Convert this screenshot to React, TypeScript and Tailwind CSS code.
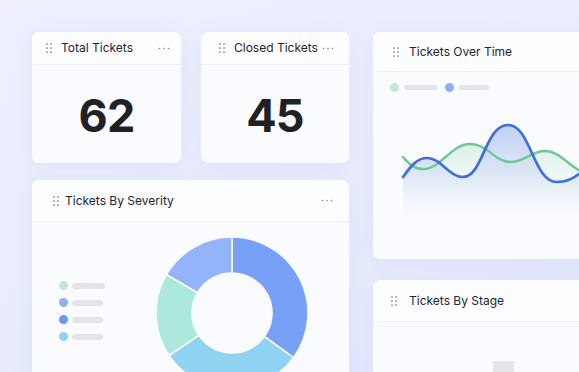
import type { ReactNode } from "react";

function DragHandle() {
  return (
    <svg width="6" height="10" viewBox="0 0 6 10" className="shrink-0">
      {[1, 5, 9].map((cy) =>
        [1, 5].map((cx) => (
          <circle key={`${cx}-${cy}`} cx={cx} cy={cy} r="0.85" fill="#6b7280" />
        )),
      )}
    </svg>
  );
}

function MoreDots() {
  return (
    <svg width="12" height="3" viewBox="0 0 12 3" className="shrink-0">
      {[1.5, 6, 10.5].map((cx) => (
        <circle key={cx} cx={cx} cy="1.5" r="0.75" fill="#7b8190" />
      ))}
    </svg>
  );
}

type CardProps = {
  title: string;
  className: string;
  headerClass: string;
  gap?: string;
  more?: boolean;
  children?: ReactNode;
};

function Card({ title, className, headerClass, gap = "ml-[9px]", more, children }: CardProps) {
  return (
    <section
      className={`flex flex-col overflow-hidden rounded-[7px] bg-[#fafbfe] shadow-[0_4px_22px_rgba(110,120,230,0.09)] ${className}`}
    >
      <header
        className={`flex shrink-0 items-center border-b border-[#eff0f6] bg-[#fdfdff] ${headerClass}`}
      >
        <DragHandle />
        <h2
          className={`${gap} flex-1 whitespace-nowrap text-[12px] font-normal text-[#23252c]`}
        >
          {title}
        </h2>
        {more ? <MoreDots /> : null}
      </header>
      {children}
    </section>
  );
}

type StatCardProps = { title: string; value: string; className: string; headerClass: string };

function StatCard({ title, value, className, headerClass }: StatCardProps) {
  return (
    <Card title={title} className={`h-[131px] ${className}`} headerClass={`h-[33px] ${headerClass}`} more>
      <div className="flex flex-1 items-center justify-center pt-[3px]">
        <span className="text-[45px] font-bold leading-none tracking-[-0.02em] text-[#1f2127]">
          {value}
        </span>
      </div>
    </Card>
  );
}

const blueLine =
  "M30 105 C38 94 44 86 54 86 C68 86 76 105 90 105 C110 105 112 53 135 53 C158 53 160 110 184 110 C198 110 204 103 215 95 C225 88 235 84 245 82";
const greenLine =
  "M30 85 C38 94 42 97 50 97 C68 97 78 72 97 72 C115 72 122 90 137 90 C152 90 158 79 172 79 C188 79 196 96 215 103 C225 106 235 104 245 100";

function LineChart() {
  return (
    <svg width="240" height="150" viewBox="0 0 240 150" className="block">
      <defs>
        <linearGradient id="blueFill" x1="0" y1="50" x2="0" y2="150" gradientUnits="userSpaceOnUse">
          <stop offset="0" stopColor="#bfcff5" stopOpacity="1" />
          <stop offset="0.45" stopColor="#d3dff5" stopOpacity="0.8" />
          <stop offset="1" stopColor="#e8eef8" stopOpacity="0" />
        </linearGradient>
        <linearGradient id="greenFill" x1="0" y1="70" x2="0" y2="130" gradientUnits="userSpaceOnUse">
          <stop offset="0" stopColor="#d6f0e2" stopOpacity="0.95" />
          <stop offset="1" stopColor="#e6f2f0" stopOpacity="0" />
        </linearGradient>
      </defs>
      <path d={`${greenLine} L245 150 L30 150 Z`} fill="url(#greenFill)" />
      <path d={`${blueLine} L245 150 L30 150 Z`} fill="url(#blueFill)" />
      <path d={greenLine} fill="none" stroke="#6fc796" strokeWidth="2.4" strokeLinecap="round" />
      <path d={blueLine} fill="none" stroke="#3f70d9" strokeWidth="2.7" strokeLinecap="round" />
    </svg>
  );
}

const donutSegments = [
  { from: 0, to: 126, color: "#78a0f7" },
  { from: 126, to: 236, color: "#90d2f1" },
  { from: 236, to: 300.5, color: "#ade8dc" },
  { from: 300.5, to: 360, color: "#93b3fa" },
];

function arcPath(from: number, to: number, ro: number, ri: number, c: number) {
  const p = (a: number, r: number) => {
    const rad = ((a - 90) * Math.PI) / 180;
    return `${(c + r * Math.cos(rad)).toFixed(2)} ${(c + r * Math.sin(rad)).toFixed(2)}`;
  };
  const large = to - from > 180 ? 1 : 0;
  return `M${p(from, ro)} A${ro} ${ro} 0 ${large} 1 ${p(to, ro)} L${p(to, ri)} A${ri} ${ri} 0 ${large} 0 ${p(from, ri)} Z`;
}

function Donut() {
  return (
    <svg width="154" height="154" viewBox="0 0 154 154" className="block shrink-0">
      {donutSegments.map((s) => (
        <path
          key={s.from}
          d={arcPath(s.from, s.to, 76, 40, 77)}
          fill={s.color}
          stroke="#fafbfe"
          strokeWidth="1.6"
        />
      ))}
    </svg>
  );
}

const severityLegend = [
  { color: "#bfe9d6", bar: "w-[33px]" },
  { color: "#8eaff6", bar: "w-[31px]" },
  { color: "#6c98ef", bar: "w-[31px]" },
  { color: "#8cd3f0", bar: "w-[31px]" },
];

export default function App() {
  return (
    <div
      className="h-[372px] w-[579px] overflow-hidden bg-[linear-gradient(160deg,#eff0fc_0%,#eaedfc_50%,#e3e8fd_100%)] pl-[32px] pt-[32px]"
      style={{ fontFamily: "Inter, 'Noto Sans', sans-serif" }}
    >
      <div className="flex gap-[24px]">
        <div className="flex w-[317px] shrink-0 flex-col gap-[17px]">
          <div className="flex gap-[20px]">
            <StatCard title="Total Tickets" value="62" className="w-[149px]" headerClass="pl-[14px] pr-[11px]" />
            <StatCard title="Closed Tickets" value="45" className="w-[148px]" headerClass="pl-[18px] pr-[15px]" />
          </div>
          <Card
            title="Tickets By Severity"
            className="h-[230px] w-[317px]"
            headerClass="h-[42px] pl-[21px] pr-[16px]"
            gap="ml-[6px]"
            more
          >
            <div className="flex items-start pt-[14px]">
              <ul className="ml-[27px] mt-[45px] flex w-[96px] shrink-0 flex-col gap-[8px]">
                {severityLegend.map((item) => (
                  <li key={item.color} className="flex items-center gap-[4px]">
                    <span className="h-[9px] w-[9px] rounded-full" style={{ backgroundColor: item.color }} />
                    <span className={`h-[6px] rounded-full bg-[#e3e5eb] ${item.bar}`} />
                  </li>
                ))}
              </ul>
              <Donut />
            </div>
          </Card>
        </div>

        <div className="flex w-[240px] shrink-0 flex-col gap-[21px]">
          <Card
            title="Tickets Over Time"
            className="h-[227px]"
            headerClass="h-[40px] pl-[20px] pr-[16px]"
            gap="ml-[10px]"
          >
            <div className="flex items-center gap-[5px] pl-[17px] pt-[11px]">
              <span className="h-[9px] w-[9px] rounded-full bg-[#c3e9d3]" />
              <span className="h-[5px] w-[33px] rounded-full bg-[#e3e5eb]" />
              <span className="ml-[3px] h-[9px] w-[9px] rounded-full bg-[#8faff5]" />
              <span className="h-[5px] w-[30px] rounded-full bg-[#e3e5eb]" />
            </div>
            <div className="-mt-[20px]">
              <LineChart />
            </div>
          </Card>
          <Card
            title="Tickets By Stage"
            className="h-[150px]"
            headerClass="h-[42px] pl-[18px] pr-[16px]"
            gap="ml-[12px]"
          >
            <div className="flex flex-1 items-end pl-[120px] pt-[39px]">
              <span className="h-full w-[21px] bg-[#e4e5ea]" />
            </div>
          </Card>
        </div>
      </div>
    </div>
  );
}
